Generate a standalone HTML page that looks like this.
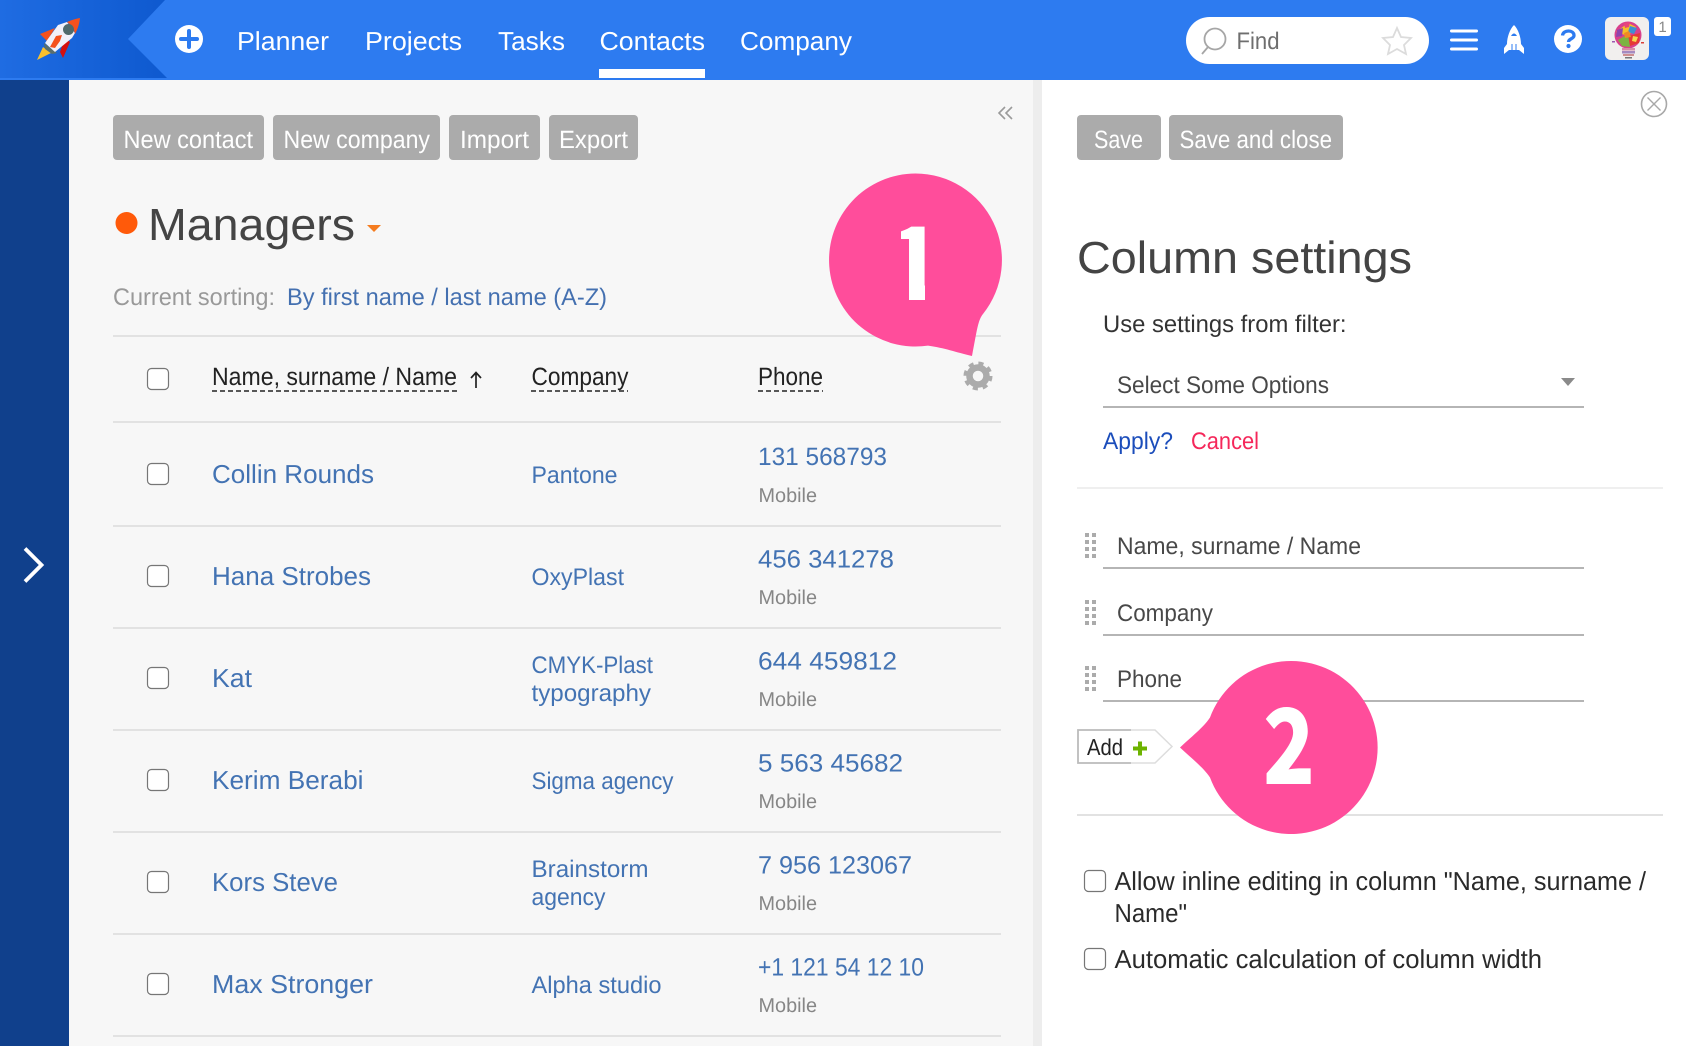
<!DOCTYPE html>
<html lang="en">
<head>
<meta charset="utf-8">
<title>Column settings</title>
<style>
html,body{margin:0;padding:0;background:#fff;width:1686px;height:1046px;overflow:hidden}
svg{display:block}
text{font-family:"Liberation Sans",sans-serif;text-rendering:geometricPrecision}
.nav{font-size:26px;fill:#fff}
.btn{font-size:25px;fill:#fff}
.nm{font-size:26px;fill:#4373b3}
.co{font-size:24px;fill:#4373b3}
.ph{font-size:25px;fill:#4373b3}
.mo{font-size:20px;fill:#868686}
.hd{font-size:25px;fill:#222}
.fld{font-size:24px;fill:#484848}
.lbl{font-size:26px;fill:#2a2a2a}
.cb{fill:#fff;stroke:#767676;stroke-width:1.2}
.ln{stroke:#e2e2e2;stroke-width:2}
.ul{stroke:#b5b5b5;stroke-width:2}
.dr{fill:#ababab}
.big{font-family:"Noto Sans CJK JP","Liberation Sans",sans-serif;font-weight:900;fill:#fff}
</style>
</head>
<body>
<svg width="1686" height="1046" viewBox="0 0 1686 1046" xmlns="http://www.w3.org/2000/svg">
<defs>
<linearGradient id="lg" x1="0" y1="0" x2="1" y2="0">
<stop offset="0" stop-color="#1f6ce2"/><stop offset="1" stop-color="#0e59cf"/>
</linearGradient>
<clipPath id="one"><polygon points="901,226 925,226 925,300 909,300 909,239 901,239"/></clipPath>
</defs>

<!-- backgrounds -->
<rect x="0" y="0" width="1686" height="1046" fill="#fff"/>
<rect x="69" y="80" width="964" height="966" fill="#f7f7f7"/>
<rect x="1033" y="80" width="9" height="966" fill="#ededed"/>
<rect x="0" y="80" width="69" height="966" fill="#10408c"/>
<rect x="0" y="0" width="1686" height="80" fill="#2d7bf0"/>
<polygon points="0,0 165,0 128,39 167,78 0,78" fill="url(#lg)"/>

<!-- logo rocket -->
<polygon points="40,34 55,28 47,41" fill="#f4511e"/>
<polygon points="60,52 63,58 70,42 65,38" fill="#d50f0f"/>
<polygon points="37,60 43,47 51,53" fill="#fbc02d"/>
<polygon points="44,43 57,53 52,54 45,49" fill="#5a6f6d"/>
<polygon points="45,43 58,25 67,22 75,33 72,38 55,52" fill="#f1f1fa"/>
<path d="M67,22 Q74,19 80,18 Q79,27 75,34 Q74,27 67,22Z" fill="#f4511e"/>
<polygon points="50,47 56,36 62,35 60,41 55,48" fill="#f4511e"/>
<circle cx="68.500" cy="29.500" r="5.500" fill="#4f6a6c"/>

<!-- plus -->
<circle cx="189" cy="39" r="14" fill="#fff"/>
<path d="M189,31V47M181,39H197" stroke="#2d7bf0" stroke-width="4" stroke-linecap="round"/>

<!-- nav -->
<text class="nav" x="237" y="50" textLength="92" lengthAdjust="spacingAndGlyphs">Planner</text>
<text class="nav" x="365" y="50" textLength="97" lengthAdjust="spacingAndGlyphs">Projects</text>
<text class="nav" x="498" y="50" textLength="67" lengthAdjust="spacingAndGlyphs">Tasks</text>
<text class="nav" x="599.500" y="50" textLength="105.500" lengthAdjust="spacingAndGlyphs">Contacts</text>
<text class="nav" x="740" y="50" textLength="112" lengthAdjust="spacingAndGlyphs">Company</text>
<rect x="599" y="69" width="106" height="9" fill="#fff"/>

<!-- search -->
<rect x="1186" y="17" width="243" height="47" rx="23.500" fill="#fff"/>
<circle cx="1215" cy="39" r="10.500" fill="none" stroke="#a6a6a6" stroke-width="1.800"/>
<path d="M1208,47L1202,54" stroke="#a6a6a6" stroke-width="1.800"/>
<text x="1236.500" y="49" font-size="24" fill="#6e6e6e" textLength="43" lengthAdjust="spacingAndGlyphs">Find</text>
<polygon points="1397,28 1401,37 1411,38 1404,45 1406,54 1397,49 1388,54 1390,45 1383,38 1393,37" fill="none" stroke="#dcdcdc" stroke-width="1.800"/>

<!-- hamburger -->
<path d="M1451.500,31H1476.500M1451.500,40H1476.500M1451.500,49H1476.500" stroke="#fff" stroke-width="3" stroke-linecap="round"/>

<!-- rocket icon -->
<path d="M1514,25C1518,29 1521,37 1521,44L1524,48V54L1519,50H1509L1504,54V48L1507,44C1507,37 1510,29 1514,25Z" fill="#fff"/>
<path d="M1511,36Q1514,31 1517,36Z" fill="#2d7bf0"/>
<path d="M1512,44V51M1516,44V51" stroke="#2d7bf0" stroke-width="1"/>

<!-- help -->
<circle cx="1568" cy="39" r="14" fill="#fff"/>
<path d="M1562.500,35.500C1563,29.500 1574,29.500 1574,35.500C1574,39 1568.500,38.500 1568.500,42" fill="none" stroke="#2d7bf0" stroke-width="3.300"/>
<circle cx="1568.500" cy="46" r="2.100" fill="#2d7bf0"/>

<!-- avatar -->
<rect x="1605" y="17" width="44" height="43" rx="6" fill="#f1efee"/>
<circle cx="1628" cy="35" r="13.500" fill="#d9408c"/>
<path d="M1616,32L1628,23L1636,27L1628,36Z" fill="#f6c026"/>
<path d="M1628,36L1640,33L1639,43L1630,46Z" fill="#e53935"/>
<path d="M1618,40L1628,34L1630,47L1622,46Z" fill="#7cb342"/>
<path d="M1630,26L1637,28L1634,34L1628,32Z" fill="#3f8fd2"/>
<path d="M1617,30L1623,28L1622,36L1616,37Z" fill="#8e44ad"/>
<path d="M1624,23L1630,22L1629,27L1625,28Z" fill="#e8467c"/>
<path d="M1624,33L1629,31L1631,37L1625,38Z" fill="#f08a24"/>
<path d="M1633,36L1638,37L1636,42L1632,41Z" fill="#f7d44c"/>
<rect x="1622" y="48" width="13" height="2.500" fill="#d98aa5"/>
<rect x="1622" y="51" width="13" height="2.500" fill="#a58ac0"/>
<rect x="1623" y="54" width="11" height="2" fill="#cf8f8f"/>
<rect x="1625" y="57" width="7" height="1.500" fill="#777"/>
<rect x="1612" y="41" width="3" height="1.500" fill="#9c5ab0"/>
<rect x="1641" y="42" width="3" height="1.500" fill="#d9403a"/>

<!-- badge -->
<rect x="1654" y="17" width="17" height="19" rx="3" fill="#fff"/>
<text x="1662.500" y="32" font-size="15" fill="#888" text-anchor="middle">1</text>

<!-- sidebar chevron -->
<path d="M25,548.500L41.500,565L25,581.500" fill="none" stroke="#fff" stroke-width="3.800"/>

<!-- toolbar -->
<rect x="113" y="115" width="151" height="45" rx="4" fill="#ababab"/>
<rect x="273" y="115" width="167" height="45" rx="4" fill="#ababab"/>
<rect x="449" y="115" width="91" height="45" rx="4" fill="#ababab"/>
<rect x="549" y="115" width="89" height="45" rx="4" fill="#ababab"/>
<text class="btn" x="123.500" y="148" textLength="129.500" lengthAdjust="spacingAndGlyphs">New contact</text>
<text class="btn" x="283.500" y="148" textLength="146.500" lengthAdjust="spacingAndGlyphs">New company</text>
<text class="btn" x="460" y="148" textLength="69" lengthAdjust="spacingAndGlyphs">Import</text>
<text class="btn" x="559" y="148" textLength="69" lengthAdjust="spacingAndGlyphs">Export</text>

<!-- collapse -->
<path d="M1005,107L999,113L1005,119M1012,107L1006,113L1012,119" fill="none" stroke="#9a9a9a" stroke-width="1.600"/>

<!-- title -->
<circle cx="126.500" cy="223" r="11" fill="#ff5a0a"/>
<text x="148" y="240" font-size="45" fill="#444" textLength="207" lengthAdjust="spacingAndGlyphs">Managers</text>
<polygon points="367,225 381,225 374,232" fill="#f57c1f"/>
<text x="113" y="305" font-size="24" fill="#999" textLength="162" lengthAdjust="spacingAndGlyphs">Current sorting:</text>
<text x="287" y="305" font-size="24" fill="#4470b0" textLength="320" lengthAdjust="spacingAndGlyphs">By first name / last name (A-Z)</text>

<!-- table head -->
<line class="ln" x1="113" y1="336" x2="1001" y2="336"/>
<rect class="cb" x="147.500" y="368.500" width="21" height="21" rx="4"/>
<text class="hd" x="212" y="385" textLength="245" lengthAdjust="spacingAndGlyphs">Name, surname / Name</text>
<path d="M212,391H457M531,391H628M758,391H823" stroke="#222" stroke-width="1.600" stroke-dasharray="5 3"/>
<path d="M476,388V373M471,378L476,372.500L481,378" fill="none" stroke="#222" stroke-width="1.700"/>
<text class="hd" x="531.500" y="385" textLength="97" lengthAdjust="spacingAndGlyphs">Company</text>
<text class="hd" x="758" y="385" textLength="65" lengthAdjust="spacingAndGlyphs">Phone</text>

<!-- gear -->
<circle cx="978" cy="376" r="12.500" fill="none" stroke="#ababab" stroke-width="4" stroke-dasharray="5 4.820"/>
<circle cx="978" cy="376" r="8.500" fill="none" stroke="#ababab" stroke-width="6.500"/>

<line class="ln" x1="113" y1="422" x2="1001" y2="422"/>
<line class="ln" x1="113" y1="526" x2="1001" y2="526"/>
<line class="ln" x1="113" y1="628" x2="1001" y2="628"/>
<line class="ln" x1="113" y1="730" x2="1001" y2="730"/>
<line class="ln" x1="113" y1="832" x2="1001" y2="832"/>
<line class="ln" x1="113" y1="934" x2="1001" y2="934"/>
<line class="ln" x1="113" y1="1036" x2="1001" y2="1036"/>

<!-- rows -->
<rect class="cb" x="147.500" y="463.500" width="21" height="21" rx="4"/>
<text class="nm" x="212" y="483" textLength="162" lengthAdjust="spacingAndGlyphs">Collin Rounds</text>
<text class="co" x="531.500" y="483" textLength="86" lengthAdjust="spacingAndGlyphs">Pantone</text>
<text class="ph" x="758" y="465" textLength="129" lengthAdjust="spacingAndGlyphs">131 568793</text>
<text class="mo" x="758.500" y="502" textLength="58.500" lengthAdjust="spacingAndGlyphs">Mobile</text>

<rect class="cb" x="147.500" y="565.500" width="21" height="21" rx="4"/>
<text class="nm" x="212" y="585" textLength="159" lengthAdjust="spacingAndGlyphs">Hana Strobes</text>
<text class="co" x="531.500" y="585" textLength="92.500" lengthAdjust="spacingAndGlyphs">OxyPlast</text>
<text class="ph" x="758" y="567.500" textLength="136" lengthAdjust="spacingAndGlyphs">456 341278</text>
<text class="mo" x="758.500" y="604" textLength="58.500" lengthAdjust="spacingAndGlyphs">Mobile</text>

<rect class="cb" x="147.500" y="667.500" width="21" height="21" rx="4"/>
<text class="nm" x="212" y="687" textLength="40" lengthAdjust="spacingAndGlyphs">Kat</text>
<text class="co" x="531.500" y="673" textLength="121.500" lengthAdjust="spacingAndGlyphs">CMYK-Plast</text>
<text class="co" x="531.500" y="701" textLength="119.500" lengthAdjust="spacingAndGlyphs">typography</text>
<text class="ph" x="758" y="669.500" textLength="139" lengthAdjust="spacingAndGlyphs">644 459812</text>
<text class="mo" x="758.500" y="706" textLength="58.500" lengthAdjust="spacingAndGlyphs">Mobile</text>

<rect class="cb" x="147.500" y="769.500" width="21" height="21" rx="4"/>
<text class="nm" x="212" y="789" textLength="151.500" lengthAdjust="spacingAndGlyphs">Kerim Berabi</text>
<text class="co" x="531.500" y="789" textLength="142" lengthAdjust="spacingAndGlyphs">Sigma agency</text>
<text class="ph" x="758" y="771.500" textLength="145" lengthAdjust="spacingAndGlyphs">5 563 45682</text>
<text class="mo" x="758.500" y="808" textLength="58.500" lengthAdjust="spacingAndGlyphs">Mobile</text>

<rect class="cb" x="147.500" y="871.500" width="21" height="21" rx="4"/>
<text class="nm" x="212" y="891" textLength="126" lengthAdjust="spacingAndGlyphs">Kors Steve</text>
<text class="co" x="531.500" y="877" textLength="117" lengthAdjust="spacingAndGlyphs">Brainstorm</text>
<text class="co" x="531.500" y="905" textLength="74" lengthAdjust="spacingAndGlyphs">agency</text>
<text class="ph" x="758" y="873.500" textLength="154" lengthAdjust="spacingAndGlyphs">7 956 123067</text>
<text class="mo" x="758.500" y="910" textLength="58.500" lengthAdjust="spacingAndGlyphs">Mobile</text>

<rect class="cb" x="147.500" y="973.500" width="21" height="21" rx="4"/>
<text class="nm" x="212" y="993" textLength="161" lengthAdjust="spacingAndGlyphs">Max Stronger</text>
<text class="co" x="531.500" y="993" textLength="130" lengthAdjust="spacingAndGlyphs">Alpha studio</text>
<text class="ph" x="758" y="975.500" textLength="166" lengthAdjust="spacingAndGlyphs">+1 121 54 12 10</text>
<text class="mo" x="758.500" y="1012" textLength="58.500" lengthAdjust="spacingAndGlyphs">Mobile</text>

<!-- pink callout 1 -->
<path d="M915.500,173.500A86.500,86.500 0 0 1 983,314C978,320 977,330 972,356C955,352 945,348 928,345.600A86.500,86.500 0 1 1 915.500,173.500Z" fill="#ff4d9b"/>
<text class="big" x="913.500" y="300" font-size="101" text-anchor="middle" clip-path="url(#one)">1</text>

<!-- right panel -->
<circle cx="1654" cy="104" r="12.500" fill="none" stroke="#a8a8a8" stroke-width="1.600"/>
<path d="M1647.500,97.500L1660.500,110.500M1660.500,97.500L1647.500,110.500" stroke="#a8a8a8" stroke-width="1.400"/>
<rect x="1077" y="115" width="84" height="45" rx="4" fill="#ababab"/>
<rect x="1169" y="115" width="174" height="45" rx="4" fill="#ababab"/>
<text class="btn" x="1094" y="148" textLength="49" lengthAdjust="spacingAndGlyphs">Save</text>
<text class="btn" x="1179.500" y="148" textLength="152.500" lengthAdjust="spacingAndGlyphs">Save and close</text>

<text x="1077" y="273" font-size="45" fill="#444" textLength="335" lengthAdjust="spacingAndGlyphs">Column settings</text>
<text x="1103" y="332" font-size="24" fill="#333" textLength="243.500" lengthAdjust="spacingAndGlyphs">Use settings from filter:</text>
<text class="fld" x="1117" y="393" textLength="212" lengthAdjust="spacingAndGlyphs">Select Some Options</text>
<polygon points="1561,378 1575,378 1568,386" fill="#8a8a8a"/>
<line class="ul" x1="1103" y1="407" x2="1584" y2="407"/>
<text x="1103" y="449" font-size="24" fill="#1b4dbb" textLength="70" lengthAdjust="spacingAndGlyphs">Apply?</text>
<text x="1191" y="449" font-size="24" fill="#f5275a" textLength="68" lengthAdjust="spacingAndGlyphs">Cancel</text>
<line x1="1077" y1="488" x2="1663" y2="488" stroke="#efefef" stroke-width="2"/>

<!-- drag handles -->
<g class="dr">
<rect x="1085" y="533" width="4" height="4"/><rect x="1092" y="533" width="4" height="4"/>
<rect x="1085" y="540" width="4" height="4"/><rect x="1092" y="540" width="4" height="4"/>
<rect x="1085" y="547" width="4" height="4"/><rect x="1092" y="547" width="4" height="4"/>
<rect x="1085" y="554" width="4" height="4"/><rect x="1092" y="554" width="4" height="4"/>
<rect x="1085" y="600" width="4" height="4"/><rect x="1092" y="600" width="4" height="4"/>
<rect x="1085" y="607" width="4" height="4"/><rect x="1092" y="607" width="4" height="4"/>
<rect x="1085" y="614" width="4" height="4"/><rect x="1092" y="614" width="4" height="4"/>
<rect x="1085" y="621" width="4" height="4"/><rect x="1092" y="621" width="4" height="4"/>
<rect x="1085" y="666" width="4" height="4"/><rect x="1092" y="666" width="4" height="4"/>
<rect x="1085" y="673" width="4" height="4"/><rect x="1092" y="673" width="4" height="4"/>
<rect x="1085" y="680" width="4" height="4"/><rect x="1092" y="680" width="4" height="4"/>
<rect x="1085" y="687" width="4" height="4"/><rect x="1092" y="687" width="4" height="4"/>
</g>

<text class="fld" x="1117" y="554" textLength="244" lengthAdjust="spacingAndGlyphs">Name, surname / Name</text>
<line class="ul" x1="1103" y1="568" x2="1584" y2="568"/>
<text class="fld" x="1117" y="621" textLength="96" lengthAdjust="spacingAndGlyphs">Company</text>
<line class="ul" x1="1103" y1="635" x2="1584" y2="635"/>
<text class="fld" x="1117" y="687" textLength="65" lengthAdjust="spacingAndGlyphs">Phone</text>
<line class="ul" x1="1103" y1="701" x2="1584" y2="701"/>

<!-- add tag -->
<path d="M1131,730H1155L1172,746.500L1155,763H1131" fill="#fff" stroke="#dddddd" stroke-width="1.500"/>
<path d="M1131,730H1078V763H1131" fill="#fff" stroke="#bbbbbb" stroke-width="1.800"/>
<text x="1087" y="755" font-size="23" fill="#222" textLength="36" lengthAdjust="spacingAndGlyphs">Add</text>
<path d="M1140,741.500V755.500M1133,748.500H1147" stroke="#6db300" stroke-width="4"/>

<line class="ln" x1="1077" y1="815" x2="1663" y2="815"/>

<!-- pink callout 2 -->
<path d="M1180,747.500C1190,738 1204,727 1210,717.500A86.500,86.500 0 1 1 1210,777.500C1204,768 1190,757 1180,747.500Z" fill="#ff4d9b"/>
<text class="big" x="1289" y="784" font-size="104" text-anchor="middle" textLength="52" lengthAdjust="spacingAndGlyphs">2</text>

<!-- options -->
<rect class="cb" x="1084.500" y="870.500" width="21" height="21" rx="4"/>
<text class="lbl" x="1114.500" y="890" textLength="531.500" lengthAdjust="spacingAndGlyphs">Allow inline editing in column "Name, surname /</text>
<text class="lbl" x="1114.500" y="922" textLength="72.500" lengthAdjust="spacingAndGlyphs">Name"</text>
<rect class="cb" x="1084.500" y="948.500" width="21" height="21" rx="4"/>
<text class="lbl" x="1114.500" y="968" textLength="427.500" lengthAdjust="spacingAndGlyphs">Automatic calculation of column width</text>
</svg>
</body>
</html>
